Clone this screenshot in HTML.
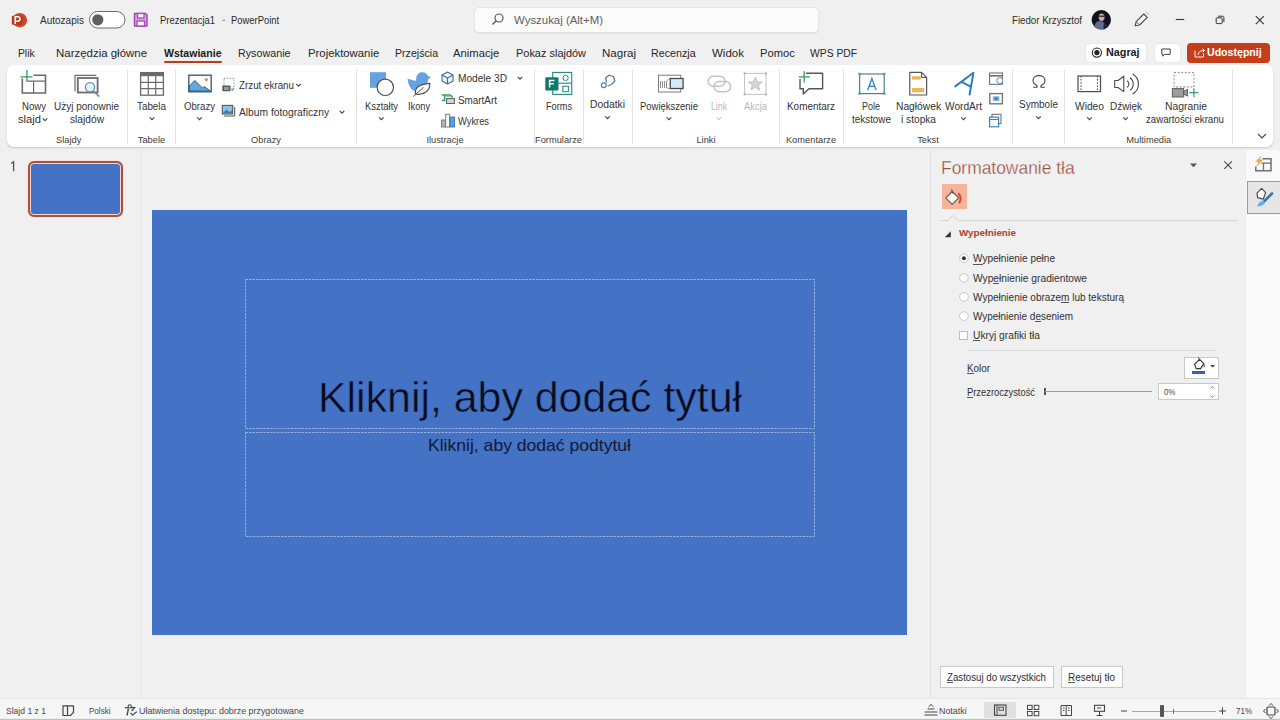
<!DOCTYPE html>
<html><head><meta charset="utf-8"><style>
html,body{margin:0;padding:0;width:1280px;height:720px;overflow:hidden;background:#f0f0f0;font-family:"Liberation Sans",sans-serif;}
.t{position:absolute;white-space:nowrap;transform-origin:0 0;}
svg{overflow:visible}
</style></head><body>
<div style="position:absolute;left:0px;top:0px;width:1280px;height:720px;background:#f0f0f0"></div>
<div style="position:absolute;left:7px;top:65px;width:1266px;height:82px;background:#fff;border-radius:7px;box-shadow:0 1.5px 2px -0.8px rgba(0,0,0,0.16)"></div>
<div style="position:absolute;left:140px;top:150px;width:1px;height:550px;background:#e6e6e6"></div>
<div style="position:absolute;left:930px;top:150px;width:1px;height:550px;background:#dedede"></div>
<div style="position:absolute;left:1246px;top:150px;width:34px;height:550px;background:#f9f9f9"></div>
<div style="position:absolute;left:0px;top:699px;width:1280px;height:21px;background:#f6f6f6"></div>
<div style="position:absolute;left:0px;top:698px;width:1280px;height:1px;background:#e6e6e6"></div>
<div style="position:absolute;left:0px;top:718px;width:1280px;height:1px;background:#e6f2ec"></div>
<div style="position:absolute;left:0px;top:719px;width:1280px;height:1px;background:#b2c6bb"></div>
<div class="t" style="left:40.00px;top:13.82px;font-size:10.50px;line-height:12.60px;color:#2b2b2b;transform:scaleX(0.9542);">Autozapis</div>
<div class="t" style="left:160.00px;top:13.82px;font-size:10.50px;line-height:12.60px;color:#2b2b2b;transform:scaleX(0.8975);">Prezentacja1</div>
<div class="t" style="left:230.60px;top:13.82px;font-size:10.50px;line-height:12.60px;color:#2b2b2b;transform:scaleX(0.8968);">PowerPoint</div>
<div style="position:absolute;left:474px;top:7px;width:345px;height:26px;background:#fbfbfb;border:1px solid #e4e4e4;border-radius:5px;box-sizing:border-box;box-shadow:0 1px 1px rgba(0,0,0,0.07)"></div>
<div class="t" style="left:514.00px;top:13.82px;font-size:10.50px;line-height:12.60px;color:#5f5f5f;transform:scaleX(1.0871);">Wyszukaj (Alt+M)</div>
<div class="t" style="left:1012.00px;top:13.82px;font-size:10.50px;line-height:12.60px;color:#2b2b2b;transform:scaleX(0.9229);">Fiedor Krzysztof</div>
<div class="t" style="left:17.80px;top:46.93px;font-size:11.00px;line-height:13.20px;color:#262626;transform:scaleX(0.9365);">Plik</div>
<div class="t" style="left:56.00px;top:46.93px;font-size:11.00px;line-height:13.20px;color:#262626;transform:scaleX(1.0408);">Narzędzia główne</div>
<div class="t" style="left:237.50px;top:46.93px;font-size:11.00px;line-height:13.20px;color:#262626;transform:scaleX(0.9758);">Rysowanie</div>
<div class="t" style="left:307.50px;top:46.93px;font-size:11.00px;line-height:13.20px;color:#262626;transform:scaleX(1.0313);">Projektowanie</div>
<div class="t" style="left:394.70px;top:46.93px;font-size:11.00px;line-height:13.20px;color:#262626;transform:scaleX(0.9659);">Przejścia</div>
<div class="t" style="left:453.40px;top:46.93px;font-size:11.00px;line-height:13.20px;color:#262626;transform:scaleX(1.0234);">Animacje</div>
<div class="t" style="left:516.00px;top:46.93px;font-size:11.00px;line-height:13.20px;color:#262626;transform:scaleX(0.9956);">Pokaz slajdów</div>
<div class="t" style="left:602.00px;top:46.93px;font-size:11.00px;line-height:13.20px;color:#262626;transform:scaleX(1.0493);">Nagraj</div>
<div class="t" style="left:651.00px;top:46.93px;font-size:11.00px;line-height:13.20px;color:#262626;transform:scaleX(0.9726);">Recenzja</div>
<div class="t" style="left:712.00px;top:46.93px;font-size:11.00px;line-height:13.20px;color:#262626;transform:scaleX(1.0471);">Widok</div>
<div class="t" style="left:759.70px;top:46.93px;font-size:11.00px;line-height:13.20px;color:#262626;transform:scaleX(1.0165);">Pomoc</div>
<div class="t" style="left:809.60px;top:46.93px;font-size:11.00px;line-height:13.20px;color:#262626;transform:scaleX(0.9399);">WPS PDF</div>
<div class="t" style="left:163.75px;top:46.93px;font-size:11.00px;line-height:13.20px;color:#1a1a1a;font-weight:bold;transform:scaleX(0.9599);">Wstawianie</div>
<div style="position:absolute;left:164px;top:61.3px;width:58px;height:2.0px;background:#b83c1e;border-radius:1px"></div>
<div style="position:absolute;left:1086px;top:43.5px;width:60px;height:18.5px;background:#fff;border-radius:4px;box-shadow:0 0 0 1px #e8e8e8"></div>
<div class="t" style="left:1105.80px;top:46.13px;font-size:11.00px;line-height:13.20px;color:#1a1a1a;font-weight:bold;transform:scaleX(0.9815);">Nagraj</div>
<div style="position:absolute;left:1155px;top:43.5px;width:25px;height:18.5px;background:#fff;border-radius:4px;box-shadow:0 0 0 1px #e8e8e8"></div>
<div style="position:absolute;left:1187px;top:43px;width:83px;height:19.5px;background:#c43e1c;border-radius:4px"></div>
<div class="t" style="left:1207.30px;top:46.13px;font-size:11.00px;line-height:13.20px;color:#fff;font-weight:bold;transform:scaleX(0.9626);">Udostępnij</div>
<div style="position:absolute;left:127px;top:69px;width:1px;height:75px;background:#e3e3e3"></div>
<div style="position:absolute;left:175px;top:69px;width:1px;height:75px;background:#e3e3e3"></div>
<div style="position:absolute;left:356px;top:69px;width:1px;height:75px;background:#e3e3e3"></div>
<div style="position:absolute;left:534px;top:69px;width:1px;height:75px;background:#e3e3e3"></div>
<div style="position:absolute;left:583px;top:69px;width:1px;height:75px;background:#e3e3e3"></div>
<div style="position:absolute;left:632px;top:69px;width:1px;height:75px;background:#e3e3e3"></div>
<div style="position:absolute;left:779px;top:69px;width:1px;height:75px;background:#e3e3e3"></div>
<div style="position:absolute;left:843px;top:69px;width:1px;height:75px;background:#e3e3e3"></div>
<div style="position:absolute;left:1012px;top:69px;width:1px;height:75px;background:#e3e3e3"></div>
<div style="position:absolute;left:1064px;top:69px;width:1px;height:75px;background:#e3e3e3"></div>
<div style="position:absolute;left:1232px;top:69px;width:1px;height:75px;background:#e3e3e3"></div>
<div class="t" style="left:56.09px;top:134.73px;font-size:9.30px;line-height:11.16px;color:#3b3b3b;transform:scaleX(1.0000);">Slajdy</div>
<div class="t" style="left:137.80px;top:134.73px;font-size:9.30px;line-height:11.16px;color:#3b3b3b;transform:scaleX(1.0000);">Tabele</div>
<div class="t" style="left:251.01px;top:134.73px;font-size:9.30px;line-height:11.16px;color:#3b3b3b;transform:scaleX(1.0000);">Obrazy</div>
<div class="t" style="left:426.39px;top:134.73px;font-size:9.30px;line-height:11.16px;color:#3b3b3b;transform:scaleX(1.0000);">Ilustracje</div>
<div class="t" style="left:534.99px;top:134.73px;font-size:9.30px;line-height:11.16px;color:#3b3b3b;transform:scaleX(1.0000);">Formularze</div>
<div class="t" style="left:696.44px;top:134.73px;font-size:9.30px;line-height:11.16px;color:#3b3b3b;transform:scaleX(1.0000);">Linki</div>
<div class="t" style="left:785.93px;top:134.73px;font-size:9.30px;line-height:11.16px;color:#3b3b3b;transform:scaleX(1.0000);">Komentarze</div>
<div class="t" style="left:917.15px;top:134.73px;font-size:9.30px;line-height:11.16px;color:#3b3b3b;transform:scaleX(1.0000);">Tekst</div>
<div class="t" style="left:1126.27px;top:134.73px;font-size:9.30px;line-height:11.16px;color:#3b3b3b;transform:scaleX(1.0000);">Multimedia</div>
<div class="t" style="left:22.00px;top:100.61px;font-size:10.00px;line-height:12.00px;color:#333333;transform:scaleX(0.9598);">Nowy</div>
<div class="t" style="left:18.00px;top:113.61px;font-size:10.00px;line-height:12.00px;color:#333333;transform:scaleX(1.1184);">slajd</div>
<div class="t" style="left:54.00px;top:100.61px;font-size:10.00px;line-height:12.00px;color:#333333;transform:scaleX(0.9995);">Użyj ponownie</div>
<div class="t" style="left:70.00px;top:113.61px;font-size:10.00px;line-height:12.00px;color:#333333;transform:scaleX(1.0195);">slajdów</div>
<div class="t" style="left:137.00px;top:100.61px;font-size:10.00px;line-height:12.00px;color:#333333;transform:scaleX(0.9842);">Tabela</div>
<div class="t" style="left:184.00px;top:100.61px;font-size:10.00px;line-height:12.00px;color:#333333;transform:scaleX(0.9618);">Obrazy</div>
<div class="t" style="left:239.00px;top:79.61px;font-size:10.00px;line-height:12.00px;color:#333333;transform:scaleX(0.9799);">Zrzut ekranu</div>
<div class="t" style="left:239.00px;top:106.61px;font-size:10.00px;line-height:12.00px;color:#333333;transform:scaleX(1.0249);">Album fotograficzny</div>
<div class="t" style="left:365.00px;top:100.61px;font-size:10.00px;line-height:12.00px;color:#333333;transform:scaleX(0.9426);">Kształty</div>
<div class="t" style="left:408.00px;top:100.61px;font-size:10.00px;line-height:12.00px;color:#333333;transform:scaleX(0.9205);">Ikony</div>
<div class="t" style="left:458.00px;top:72.61px;font-size:10.00px;line-height:12.00px;color:#333333;transform:scaleX(1.0133);">Modele 3D</div>
<div class="t" style="left:458.00px;top:94.61px;font-size:10.00px;line-height:12.00px;color:#333333;transform:scaleX(0.9887);">SmartArt</div>
<div class="t" style="left:458.00px;top:115.61px;font-size:10.00px;line-height:12.00px;color:#333333;transform:scaleX(0.9325);">Wykres</div>
<div class="t" style="left:546.00px;top:100.61px;font-size:10.00px;line-height:12.00px;color:#333333;transform:scaleX(0.9178);">Forms</div>
<div class="t" style="left:590.00px;top:98.61px;font-size:10.00px;line-height:12.00px;color:#333333;transform:scaleX(1.0323);">Dodatki</div>
<div class="t" style="left:640.00px;top:100.61px;font-size:10.00px;line-height:12.00px;color:#333333;transform:scaleX(0.9486);">Powiększenie</div>
<div class="t" style="left:711.00px;top:100.61px;font-size:10.00px;line-height:12.00px;color:#b8b8b8;transform:scaleX(0.8722);">Link</div>
<div class="t" style="left:744.00px;top:100.61px;font-size:10.00px;line-height:12.00px;color:#b8b8b8;transform:scaleX(0.9406);">Akcja</div>
<div class="t" style="left:787.00px;top:100.61px;font-size:10.00px;line-height:12.00px;color:#333333;transform:scaleX(0.9927);">Komentarz</div>
<div class="t" style="left:862.00px;top:100.61px;font-size:10.00px;line-height:12.00px;color:#333333;transform:scaleX(0.8994);">Pole</div>
<div class="t" style="left:852.00px;top:113.61px;font-size:10.00px;line-height:12.00px;color:#333333;transform:scaleX(0.9883);">tekstowe</div>
<div class="t" style="left:896.00px;top:100.61px;font-size:10.00px;line-height:12.00px;color:#333333;transform:scaleX(1.0248);">Nagłówek</div>
<div class="t" style="left:901.00px;top:113.61px;font-size:10.00px;line-height:12.00px;color:#333333;transform:scaleX(1.0156);">i stopka</div>
<div class="t" style="left:945.00px;top:100.61px;font-size:10.00px;line-height:12.00px;color:#333333;transform:scaleX(1.0140);">WordArt</div>
<div class="t" style="left:1019.00px;top:98.61px;font-size:10.00px;line-height:12.00px;color:#333333;transform:scaleX(1.0024);">Symbole</div>
<div class="t" style="left:1075.00px;top:100.61px;font-size:10.00px;line-height:12.00px;color:#333333;transform:scaleX(1.0232);">Wideo</div>
<div class="t" style="left:1110.00px;top:100.61px;font-size:10.00px;line-height:12.00px;color:#333333;transform:scaleX(0.9930);">Dźwięk</div>
<div class="t" style="left:1165.00px;top:100.61px;font-size:10.00px;line-height:12.00px;color:#333333;transform:scaleX(1.0350);">Nagranie</div>
<div class="t" style="left:1146.00px;top:113.61px;font-size:10.00px;line-height:12.00px;color:#333333;transform:scaleX(0.9679);">zawartości ekranu</div>
<div style="position:absolute;left:27.5px;top:161.2px;width:95.3px;height:56.10000000000002px;border:2px solid #a8523e;border-radius:6px;box-sizing:border-box;background:#4472c4;box-shadow:inset 0 0 0 1px #f4d8d0,0 0 0 1px #fbe3da"></div>
<div style="position:absolute;left:152px;top:210px;width:755px;height:425px;background:#4472c4"></div>
<div class="t" style="left:318.00px;top:372.78px;font-size:42.00px;line-height:50.40px;color:#080c1c;transform:scaleX(1.0204);-webkit-text-stroke:0.5px #4472c4;">Kliknij, aby dodać tytuł</div>
<div class="t" style="left:428.00px;top:436.00px;font-size:17.00px;line-height:20.40px;color:#121a36;transform:scaleX(1.0328);">Kliknij, aby dodać podtytuł</div>
<div class="t" style="left:940.90px;top:157.61px;font-size:18.00px;line-height:21.60px;color:#9c4c38;transform:scaleX(0.9678);-webkit-text-stroke:0.3px #f0f0f0;">Formatowanie tła</div>
<div style="position:absolute;left:941.6px;top:184.3px;width:25.0px;height:25.0px;background:#f4b59c"></div>
<div class="t" style="left:959.00px;top:227.23px;font-size:9.80px;line-height:11.76px;color:#a9442a;font-weight:bold;transform:scaleX(1.0001);">Wypełnienie</div>
<div class="t" style="left:973.00px;top:253.01px;font-size:10.00px;line-height:12.00px;color:#303030;transform:scaleX(1.0046);">Wypełnienie pełne</div>
<div style="position:absolute;left:973.0px;top:263.5px;width:9.5px;height:0.7999999999999545px;background:#303030;opacity:0.8"></div>
<div class="t" style="left:973.00px;top:272.62px;font-size:10.00px;line-height:12.00px;color:#303030;transform:scaleX(1.0211);">Wypełnienie gradientowe</div>
<div style="position:absolute;left:993.3px;top:283.1px;width:5.7000000000000455px;height:0.7999999999999545px;background:#303030;opacity:0.8"></div>
<div class="t" style="left:973.00px;top:291.71px;font-size:10.00px;line-height:12.00px;color:#303030;transform:scaleX(1.0031);">Wypełnienie obrazem lub teksturą</div>
<div style="position:absolute;left:1061.0px;top:302.2px;width:8.400000000000091px;height:0.7999999999999545px;background:#303030;opacity:0.8"></div>
<div class="t" style="left:973.00px;top:310.92px;font-size:10.00px;line-height:12.00px;color:#303030;transform:scaleX(0.9949);">Wypełnienie deseniem</div>
<div style="position:absolute;left:1035.4px;top:321.40000000000003px;width:5.5px;height:0.7999999999999545px;background:#303030;opacity:0.8"></div>
<div style="position:absolute;left:959.4px;top:330.6px;width:9.0px;height:9.399999999999977px;border:1px solid #bdbdbd;background:#fff;box-sizing:border-box"></div>
<div class="t" style="left:973.00px;top:329.92px;font-size:10.00px;line-height:12.00px;color:#303030;transform:scaleX(1.0219);">Ukryj grafiki tła</div>
<div style="position:absolute;left:973.0px;top:340.40000000000003px;width:7.399999999999977px;height:0.7999999999999545px;background:#303030;opacity:0.8"></div>
<div style="position:absolute;left:968px;top:350px;width:249px;height:1px;background:#dadada"></div>
<div class="t" style="left:967.00px;top:362.92px;font-size:10.00px;line-height:12.00px;color:#303030;transform:scaleX(0.9853);">Kolor</div>
<div style="position:absolute;left:967.0px;top:373.40000000000003px;width:6.600000000000023px;height:0.7999999999999545px;background:#303030;opacity:0.8"></div>
<div style="position:absolute;left:1184.3px;top:356.5px;width:35.200000000000045px;height:22.100000000000023px;border:1px solid #c8c8c8;background:#fff;box-sizing:border-box"></div>
<div style="position:absolute;left:1191.6px;top:370.8px;width:13.0px;height:2.8999999999999773px;background:#3a5fb5"></div>
<div class="t" style="left:967.00px;top:386.72px;font-size:10.00px;line-height:12.00px;color:#303030;transform:scaleX(0.9342);">Przezroczystość</div>
<div style="position:absolute;left:967.0px;top:397.20000000000005px;width:6.2000000000000455px;height:0.7999999999999545px;background:#303030;opacity:0.8"></div>
<div style="position:absolute;left:1044px;top:388px;width:1.5px;height:7px;background:#555"></div>
<div style="position:absolute;left:1045px;top:391px;width:107px;height:1px;background:#9d9d9d"></div>
<div style="position:absolute;left:1158.2px;top:383.2px;width:61.299999999999955px;height:17.19999999999999px;border:1px solid #c8c8c8;background:#fff;box-sizing:border-box"></div>
<div class="t" style="left:1163.70px;top:386.70px;font-size:8.50px;line-height:10.20px;color:#444;transform:scaleX(0.9198);">0%</div>
<div style="position:absolute;left:940px;top:666px;width:114px;height:22px;border:1px solid #c8c8c8;background:#fdfdfd;box-sizing:border-box"></div>
<div class="t" style="left:947.00px;top:671.91px;font-size:10.00px;line-height:12.00px;color:#303030;transform:scaleX(0.9682);">Zastosuj do wszystkich</div>
<div style="position:absolute;left:947.0px;top:682.4px;width:5.899999999999977px;height:0.7999999999999545px;background:#303030;opacity:0.8"></div>
<div style="position:absolute;left:1061px;top:666px;width:62px;height:22px;border:1px solid #c8c8c8;background:#fdfdfd;box-sizing:border-box"></div>
<div class="t" style="left:1068.00px;top:671.91px;font-size:10.00px;line-height:12.00px;color:#303030;transform:scaleX(0.9948);">Resetuj tło</div>
<div style="position:absolute;left:1068.0px;top:682.4px;width:7.2000000000000455px;height:0.7999999999999545px;background:#303030;opacity:0.8"></div>
<div style="position:absolute;left:1246.6px;top:180.6px;width:33.40000000000009px;height:33.099999999999994px;background:#e6e6e6;border:1px solid #9a9a9a;border-right:none;box-sizing:border-box"></div>
<div class="t" style="left:6.00px;top:705.74px;font-size:8.60px;line-height:10.32px;color:#474747;transform:scaleX(0.9961);">Slajd 1 z 1</div>
<div class="t" style="left:88.80px;top:705.64px;font-size:8.60px;line-height:10.32px;color:#474747;transform:scaleX(0.9372);">Polski</div>
<div class="t" style="left:139.00px;top:705.74px;font-size:8.60px;line-height:10.32px;color:#474747;transform:scaleX(1.0334);">Ułatwienia dostępu: dobrze przygotowane</div>
<div class="t" style="left:939.40px;top:705.74px;font-size:8.60px;line-height:10.32px;color:#474747;transform:scaleX(1.0349);">Notatki</div>
<div style="position:absolute;left:984.4px;top:701.5px;width:31.200000000000045px;height:16.5px;background:#e0e0e0"></div>
<div style="position:absolute;left:1132px;top:710.5px;width:84px;height:1.1000000000000227px;background:#a8a8a8"></div>
<div style="position:absolute;left:1160px;top:704.5px;width:3.5px;height:12.5px;background:#555;border-radius:1px"></div>
<div style="position:absolute;left:1173px;top:708.5px;width:1px;height:5.0px;background:#777"></div>
<div class="t" style="left:1236.00px;top:705.94px;font-size:8.60px;line-height:10.32px;color:#444;transform:scaleX(0.9296);">71%</div>
<svg style="position:absolute;left:0;top:0" width="1280" height="720" viewBox="0 0 1280 720" fill="none"><circle cx="19.8" cy="20.2" r="7.3" fill="#c9472a"/><path d="M12.8 15.8 h8.6 a1 1 0 0 1 1 1 v7 a1 1 0 0 1 -1 1 h-8.6 a1 1 0 0 1 -1 -1 v-7 a1 1 0 0 1 1 -1z" fill="#b53a1f"/><path d="M15.2 24 v-7.2 h2.6 a2.2 2.2 0 0 1 0 4.4 h-2.6" stroke="#fff" stroke-width="1.5" fill="none"/><rect x="89.5" y="11.5" width="35.5" height="16.5" rx="8.25" fill="#fff" stroke="#6a6a6a" stroke-width="1"/><circle cx="97.8" cy="19.8" r="5.6" fill="#5e5e5e"/><path d="M134.5 13.5 h11 l1.5 1.5 v11 h-12.5z" fill="#d9a6e2" stroke="#a448b8" stroke-width="1.5" stroke-linejoin="round"/><rect x="137.5" y="13.5" width="6.5" height="4.5" fill="#fff" stroke="#a448b8" stroke-width="1.3"/><rect x="137" y="21" width="7.5" height="5" fill="#fff" stroke="#a448b8" stroke-width="1.3"/><rect x="222.5" y="19.8" width="2.5" height="1" fill="#777"/><circle cx="499" cy="18" r="4" stroke="#555" stroke-width="1.2"/><path d="M496.2 20.8 L492.5 24.5" stroke="#555" stroke-width="1.3"/><clipPath id="av"><circle cx="1101.3" cy="19.8" r="9.7"/></clipPath><g clip-path="url(#av)"><rect x="1090" y="9" width="24" height="24" fill="#10131d"/><path d="M1094 31 C1094 24 1096 21 1100 21 C1104 21 1106 24 1106 31z" fill="#5b6d92"/><ellipse cx="1101.6" cy="17.2" rx="2.9" ry="3.8" fill="#c9a8a8"/><rect x="1098.6" y="15.6" width="6" height="1.3" fill="#3a2a2a"/><path d="M1104 22 L1108 26 V31 H1103z" fill="#1e2740"/></g><path d="M1135.2 25.8 L1136.2 21.6 L1143.8 14 L1147.2 17.4 L1139.6 25z z" stroke="#4a4a4a" stroke-width="1.15" stroke-linejoin="round" fill="#fafafa"/><path d="M1136.4 21.8 L1139.2 24.6" stroke="#4a4a4a" stroke-width="0.9"/><path d="M1146.2 11.6 l0.6 1.6 M1148.6 13.4 l-1.5 0.6" stroke="#7fb8b0" stroke-width="0.8"/><path d="M1175.8 19.5 h8.4" stroke="#333" stroke-width="1.1"/><rect x="1216.2" y="17.8" width="6" height="5.8" rx="0.8" stroke="#333" stroke-width="1"/><path d="M1218 16.2 h4.4 a1.5 1.5 0 0 1 1.5 1.5 v4.4" stroke="#333" stroke-width="1"/><path d="M1255.8 16.2 l8 8 M1263.8 16.2 l-8 8" stroke="#333" stroke-width="1.1"/><circle cx="1096.9" cy="52.6" r="4.6" stroke="#222" stroke-width="1.1"/><circle cx="1096.9" cy="52.6" r="2.6" fill="#222"/><path d="M1161.8 49 h8.4 v5.4 h-5.6 l-1.8 1.8 v-1.8 h-1 z" stroke="#333" stroke-width="0.95" stroke-linejoin="round"/><path d="M1195 50.5 v6.5 h8.5 v-3.5" stroke="#fff" stroke-width="1" fill="none" opacity="0.9"/><path d="M1198 55 q1 -4.5 5 -4.5 h1.5 M1202.5 48.5 l2 2 l-2 2" stroke="#fff" stroke-width="1" fill="none" opacity="0.9"/><path d="M42.7 118.3 l2.3 2.3 l2.3 -2.3" stroke="#474747" stroke-width="1.15" fill="none"/><path d="M149.7 117.3 l2.3 2.3 l2.3 -2.3" stroke="#474747" stroke-width="1.15" fill="none"/><path d="M197.2 117.3 l2.3 2.3 l2.3 -2.3" stroke="#474747" stroke-width="1.15" fill="none"/><path d="M296.2 83.8 l2.3 2.3 l2.3 -2.3" stroke="#474747" stroke-width="1.15" fill="none"/><path d="M339.7 110.8 l2.3 2.3 l2.3 -2.3" stroke="#474747" stroke-width="1.15" fill="none"/><path d="M379.0 117.3 l2.3 2.3 l2.3 -2.3" stroke="#474747" stroke-width="1.15" fill="none"/><path d="M517.7 76.8 l2.3 2.3 l2.3 -2.3" stroke="#474747" stroke-width="1.15" fill="none"/><path d="M605.2 116.3 l2.3 2.3 l2.3 -2.3" stroke="#474747" stroke-width="1.15" fill="none"/><path d="M666.7 117.3 l2.3 2.3 l2.3 -2.3" stroke="#474747" stroke-width="1.15" fill="none"/><path d="M716.7 117.3 l2.3 2.3 l2.3 -2.3" stroke="#c8c8c8" stroke-width="1.15" fill="none"/><path d="M961.2 117.3 l2.3 2.3 l2.3 -2.3" stroke="#474747" stroke-width="1.15" fill="none"/><path d="M1036.2 116.3 l2.3 2.3 l2.3 -2.3" stroke="#474747" stroke-width="1.15" fill="none"/><path d="M1087.2 117.3 l2.3 2.3 l2.3 -2.3" stroke="#474747" stroke-width="1.15" fill="none"/><path d="M1123.2 117.3 l2.3 2.3 l2.3 -2.3" stroke="#474747" stroke-width="1.15" fill="none"/><path d="M1258 134 l4 4 l4 -4" stroke="#444" stroke-width="1.1" fill="none"/><path d="M33.5 75.3 H45.5 V93 H22.3 V78.5" stroke="#6b6b6b" stroke-width="1.6"/><path d="M27.5 81.2 H45.5 M33.6 81.2 V93" stroke="#6b6b6b" stroke-width="1.2"/><path d="M26.9 70 V82 M20.5 76.8 H32.5" stroke="#2e9e5e" stroke-width="1.3"/><path d="M75 91.2 V75.3 H96.3" stroke="#6b6b6b" stroke-width="1.2"/><rect x="77.8" y="78" width="19.8" height="14.5" stroke="#6b6b6b" stroke-width="1.8" fill="#fff"/><circle cx="90" cy="87.3" r="4.6" stroke="#5b8db8" stroke-width="1.3" fill="#e8f2fa"/><path d="M93.3 90.8 L99.3 96.6" stroke="#5b8db8" stroke-width="1.5"/><rect x="140.6" y="72.6" width="22.8" height="22.6" stroke="#6b6b6b" stroke-width="1.3" fill="#fff"/><rect x="140.6" y="72.6" width="22.8" height="3.6" fill="#6b6b6b"/><path d="M148.3 76 V95 M155.7 76 V95 M140.6 82.3 H163.4 M140.6 88.6 H163.4" stroke="#6b6b6b" stroke-width="1.2"/><rect x="188.8" y="75.2" width="22.4" height="16.6" stroke="#415f77" stroke-width="1.4" fill="#fff"/><path d="M189.5 91 V86 L194.8 80.5 L202.5 88 L204 86.5 L210.5 91 z" fill="#62a5e0" stroke="#2f5f86" stroke-width="1"/><circle cx="206.3" cy="79.6" r="1.7" fill="#e0953f"/><rect x="224" y="78.3" width="10" height="10.8" stroke="#8a8a8a" stroke-width="0.9" stroke-dasharray="1.6 1.2"/><rect x="222.3" y="85.5" width="8.2" height="5.8" rx="0.8" fill="#5c5c5c"/><rect x="224" y="87" width="4.8" height="3" fill="#9a9a9a"/><path d="M233 87.5 v3 h-1.5" stroke="#3aa060" stroke-width="0.9"/><path d="M224 116 H234.7 V107" stroke="#555" stroke-width="1"/><rect x="222.3" y="105.4" width="10.4" height="8.6" stroke="#555" stroke-width="1.1" fill="#8cc3e8"/><path d="M223 113 L226.5 109.5 L229.5 112 L232 110.5 V113.5 H223z" fill="#3d7fb5"/><rect x="370" y="72.2" width="16" height="15.6" fill="#62a3e0"/><circle cx="385.3" cy="87.3" r="8.2" fill="#fff" stroke="#4f4f4f" stroke-width="1.2"/><path d="M407.6 78.8 C410.5 79.5 413 80.5 416.2 80.8 C416 79.8 416 78.8 416.3 77.8 C416.8 74.2 419.3 72.2 422.3 72.2 C425.3 72.2 427.3 74 428 76 L431 77 L428 79.5 C428 84 425 88 421 89.5 L414 91 C410 89 408 84 407.6 78.8z" fill="#62a3e0"/><path d="M415.5 94 C414.5 88 418.5 84.2 429.8 83.3 C430.3 90.5 424.5 95 416.5 94.2 z" fill="#fff" stroke="#4f4f4f" stroke-width="1.2"/><path d="M413.3 96.5 L423.5 87.3" stroke="#4f4f4f" stroke-width="1"/><path d="M447.5 72 L453 75 V81 L447.5 84 L442 81 V75 z M442 75 L447.5 78 L453 75 M447.5 78 V84" stroke="#3c6d8e" stroke-width="1.1" stroke-linejoin="round" fill="#eaf4fb"/><path d="M441.8 95 H450 L452.8 97.2 M444.6 95 V100.6 M441.8 100.4 H445.2" stroke="#3f9a62" stroke-width="1.5" fill="none"/><path d="M445.5 96.5 H450.5 L452 98" stroke="#8fd0a4" stroke-width="1.2" fill="none"/><rect x="446.6" y="98.6" width="7.8" height="4.9" fill="#d6d6d6" stroke="#5a5a5a" stroke-width="1"/><rect x="441.5" y="120" width="4" height="7" fill="#b5b5b5" stroke="#707070" stroke-width="0.8"/><rect x="445.7" y="114.3" width="4" height="12.7" fill="#fff" stroke="#707070" stroke-width="0.9"/><rect x="450" y="117" width="4.6" height="10" fill="#5aa0dc" stroke="#2f6e9e" stroke-width="0.8"/><rect x="552.7" y="72.4" width="19" height="22" stroke="#1f8a7e" stroke-width="1.1" fill="#fff"/><path d="M552.7 83.2 H571.7" stroke="#1f8a7e" stroke-width="1.1"/><circle cx="565.6" cy="77.9" r="2.6" stroke="#1f8a7e" stroke-width="1"/><rect x="562.8" y="86.3" width="5.6" height="5.4" stroke="#1f8a7e" stroke-width="1"/><rect x="545.3" y="77.3" width="13.2" height="13.1" rx="1" fill="#0e7a6d"/><path d="M549.6 87.6 V80.4 H554.5 M549.6 83.8 H553.8" stroke="#fff" stroke-width="1.5"/><path d="M606.5 82.5 L605.5 78 L609 75.2 L613.5 76.5 L614.8 81 L611.5 84.5 L607.5 86" stroke="#5a7ea6" stroke-width="1.3" fill="none" stroke-linejoin="round"/><circle cx="603.8" cy="85.2" r="2.4" stroke="#5a7ea6" stroke-width="1.2"/><rect x="658.5" y="75.2" width="22.2" height="16.8" stroke="#7a7a7a" stroke-width="1" fill="#fff"/><path d="M660.5 81 v7 M662.5 81 v7 M664.5 81 v7 M666.5 81 v7" stroke="#8e8e8e" stroke-width="1"/><path d="M666.5 81 L670 78.5 M666.5 88 L670 88.5" stroke="#8e8e8e" stroke-width="0.8"/><rect x="670.3" y="78.5" width="12.8" height="10" stroke="#4a4a4a" stroke-width="1.3" fill="#d6eaf8"/><rect x="708" y="76.2" width="17" height="10" rx="5" stroke="#c4c4c4" stroke-width="1.5"/><rect x="714" y="81.5" width="16.6" height="10.3" rx="5" stroke="#c4c4c4" stroke-width="1.5"/><rect x="744.6" y="73.4" width="21.4" height="21" stroke="#c0c0c0" stroke-width="1"/><path d="M755.3 77 L757.2 81.8 L762.2 82 L758.3 85.2 L759.7 90 L755.3 87.3 L750.9 90 L752.3 85.2 L748.4 82 L753.4 81.8z" fill="#d6d6d6" stroke="#b8b8b8" stroke-width="0.8"/><rect x="743.6" y="72.4" width="2" height="2" fill="#b0b0b0"/><rect x="765" y="72.4" width="2" height="2" fill="#b0b0b0"/><rect x="743.6" y="93.4" width="2" height="2" fill="#b0b0b0"/><rect x="765" y="93.4" width="2" height="2" fill="#b0b0b0"/><path d="M806 73.2 H822.6 V88.8 H809 L803.3 94 V88.8 H800 V79" stroke="#555" stroke-width="1.4" stroke-linejoin="round" fill="#fff"/><path d="M804.2 71.2 V82.5 M798.6 76.9 H809.8" stroke="#2ea05e" stroke-width="1.3"/><rect x="859.6" y="74" width="24.6" height="19.6" stroke="#5a7c8c" stroke-width="1.2" fill="#fff"/><path d="M867.7 90 L871.9 78.6 L876.1 90 M869.2 86.2 H874.6" stroke="#3a8cc8" stroke-width="1.5" fill="none"/><rect x="858.4" y="72.8" width="2.4" height="2.4" fill="#4f9aa8"/><rect x="858.4" y="92.4" width="2.4" height="2.4" fill="#4f9aa8"/><rect x="883.0" y="72.8" width="2.4" height="2.4" fill="#4f9aa8"/><rect x="883.0" y="92.4" width="2.4" height="2.4" fill="#4f9aa8"/><path d="M909.8 72.4 H921.5 L926.6 77.5 V95 H909.8z" stroke="#555" stroke-width="1.2" fill="#fff" stroke-linejoin="round"/><path d="M921.5 72.4 V77.5 H926.6" stroke="#555" stroke-width="1"/><rect x="912" y="76.3" width="8.8" height="3.3" fill="#efb655"/><rect x="912" y="88" width="12" height="4.2" fill="#efb655"/><path d="M955.2 86.4 L973.4 72.8 L969.6 94.6 M961.5 81.8 L970.3 86.3" stroke="#2c7cc2" stroke-width="2" stroke-linecap="round" stroke-linejoin="round" fill="none"/><rect x="989.6" y="73" width="12.8" height="11.3" stroke="#666" stroke-width="1" fill="#fff"/><path d="M989.6 75.8 H1002.4" stroke="#666" stroke-width="1.5"/><circle cx="999.8" cy="80.6" r="3" stroke="#4f93c7" stroke-width="1" fill="#fff"/><rect x="989.8" y="93.6" width="12.6" height="10.2" stroke="#777" stroke-width="1.4" fill="#fff"/><rect x="992.8" y="96.3" width="6.6" height="4.8" fill="#7fb4de"/><rect x="994.8" y="97.5" width="2.6" height="2.3" fill="#2a6fb0"/><rect x="992" y="114.3" width="9" height="9.2" stroke="#666" stroke-width="1" fill="#fff"/><rect x="989.6" y="117.2" width="9" height="9.6" stroke="#3a84c0" stroke-width="1.2" fill="#fff"/><path d="M989.6 119.5 H998.6" stroke="#3a84c0" stroke-width="1"/><path d="M1033.2 87.2 H1037 V85.6 C1034.4 84.4 1033 82.4 1033 80.4 C1033 77.6 1035.5 75.6 1039 75.6 C1042.5 75.6 1045 77.6 1045 80.4 C1045 82.4 1043.6 84.4 1041 85.6 V87.2 H1044.8" stroke="#444" stroke-width="1.1" fill="none"/><rect x="1078" y="76" width="22.5" height="15.6" stroke="#4a4a4a" stroke-width="1.2" fill="#fff"/><path d="M1081 76 V91.6 M1097.5 76 V91.6" stroke="#4a4a4a" stroke-width="1.1" stroke-dasharray="1.5 1.6"/><path d="M1114.7 80.5 H1118 L1123.8 76.2 V91.6 L1118 87.5 H1114.7z" stroke="#4a4a4a" stroke-width="1.1" fill="#fff" stroke-linejoin="round"/><path d="M1127 80.8 a3.8 3.8 0 0 1 0 6.6 M1129.8 77.8 a7.5 7.5 0 0 1 0 12.6 M1132.6 74 a11.5 11.5 0 0 1 0 20" stroke="#4a4a4a" stroke-width="1.1" fill="none"/><rect x="1174" y="72.6" width="20" height="14.4" stroke="#8a8a8a" stroke-width="1" stroke-dasharray="2 1.6"/><rect x="1172.3" y="88.6" width="11.4" height="8.4" fill="#9c9c9c" stroke="#555" stroke-width="0.9"/><path d="M1183.7 91.5 L1187.5 89.2 V96.2 L1183.7 94z" fill="#9c9c9c" stroke="#555" stroke-width="0.9"/><path d="M1193.9 88.2 V97.2 M1189.4 92.7 H1198.4" stroke="#2ea05e" stroke-width="1.2"/><path d="M13.6 171.2 V161.8 L11.2 163.6" stroke="#6e4a3c" stroke-width="1.3" fill="none"/><rect x="245.5" y="279.5" width="569" height="149" stroke="#95b0e0" stroke-width="1" stroke-dasharray="2.5 1"/><rect x="245.5" y="432.5" width="569" height="104" stroke="#95b0e0" stroke-width="1" stroke-dasharray="2.5 1"/><path d="M1190 163.5 h7 l-3.5 3.8z" fill="#555"/><path d="M1224.3 161.3 l7.5 7.5 M1231.8 161.3 l-7.5 7.5" stroke="#444" stroke-width="1.1"/><path d="M952.2 191.5 L958.6 197.9 L952.2 204.3 L945.8 197.9z" fill="#fff" stroke="#7a4a3a" stroke-width="1.1" stroke-linejoin="round"/><path d="M958.8 193.8 Q962 197.5 959.5 202.5" stroke="#d2492a" stroke-width="2" fill="none" stroke-linecap="round"/><path d="M951.5 189.5 L953.2 193.5" stroke="#555" stroke-width="1.2"/><path d="M940 220.7 H947.5 L952.7 215.5 L957.9 220.7 H1237" stroke="#d2d2d2" stroke-width="1" fill="none"/><path d="M944.8 237.3 L950.8 231.3 V237.3z" fill="#333"/><circle cx="963.9" cy="258.2" r="4.3" fill="#fff" stroke="#c2c2c2" stroke-width="0.9"/><circle cx="963.9" cy="258.2" r="2" fill="#333"/><circle cx="963.9" cy="277.8" r="4.3" fill="#fff" stroke="#c2c2c2" stroke-width="0.9"/><circle cx="963.9" cy="296.9" r="4.3" fill="#fff" stroke="#c2c2c2" stroke-width="0.9"/><circle cx="963.9" cy="316.1" r="4.3" fill="#fff" stroke="#c2c2c2" stroke-width="0.9"/><path d="M1194.6 364.2 L1199.6 359.4 L1203.8 363.6 L1200.6 368.6 L1196.2 368.6z" stroke="#333" stroke-width="1.15" fill="#fff" stroke-linejoin="round"/><path d="M1199.2 359.5 L1198.5 357.5" stroke="#333" stroke-width="1"/><path d="M1204.2 364.2 v3" stroke="#2f6fb5" stroke-width="1.2"/><path d="M1210 365 h5.2 l-2.6 2.6z" fill="#444"/><path d="M1210.3 388.5 l2 -2 l2 2 M1210.3 395.5 l2 2 l2 -2" stroke="#777" stroke-width="0.9" fill="none"/><g transform="translate(0,1)"><path d="M1262.5 157.8 H1271 V169.8 H1255.8 V165.5" stroke="#707070" stroke-width="1.5" fill="none"/><path d="M1261.5 162.2 H1271 M1263.5 162.2 V169.8" stroke="#707070" stroke-width="1.3"/><path d="M1261.8 154.2 L1255.3 160.8 H1258.6 L1256 166.5 L1263 158.6 H1259.6z" fill="#f0a22e"/></g><path d="M1257 193.2 L1261.6 188.4 L1265.6 192.6 L1263.2 199.2 L1257.6 197.6z" stroke="#4a4a4a" stroke-width="1.2" fill="#fff" stroke-linejoin="round"/><path d="M1264.5 201 L1272 193.5" stroke="#3a74b4" stroke-width="2.6" stroke-linecap="round"/><path d="M1257 206.5 Q1258.5 201.5 1263 200.5 L1265.2 203 Q1262.5 206.5 1257 206.5z" fill="#62b2e6"/><path d="M63 705.8 h10.5 v6.5 l-3 3.2 h-7.5 z M67.5 705.8 v9.7" stroke="#444" stroke-width="1.2" fill="none" stroke-linejoin="round"/><circle cx="129.7" cy="706.4" r="1.6" stroke="#444" stroke-width="1.1"/><path d="M124.9 707.8 Q127 707.2 128.3 708 M131 708 Q133 707.2 134.7 707.6 L131.6 711" stroke="#444" stroke-width="1.2" fill="none"/><path d="M128.4 708.6 L127 715.5" stroke="#444" stroke-width="1.4"/><path d="M130.5 712.8 L132.6 715 L136.8 711.8" stroke="#444" stroke-width="1.2" fill="none"/><path d="M924.5 712 h13 M924.5 715 h13 M927.5 709 h7" stroke="#444" stroke-width="1"/><path d="M928.5 706.8 l2.5 -2.3 l2.5 2.3" stroke="#444" stroke-width="1" fill="none"/><rect x="994.5" y="705" width="11.5" height="10.3" stroke="#444" stroke-width="1.1"/><path d="M997 705 v10.3" stroke="#444" stroke-width="1"/><rect x="999" y="707.2" width="4.5" height="3" stroke="#444" stroke-width="0.9"/><rect x="1027.5" y="705.3" width="4.6" height="4.2" stroke="#444" stroke-width="1"/><rect x="1034.2" y="705.3" width="4.6" height="4.2" stroke="#444" stroke-width="1"/><rect x="1027.5" y="711.5" width="4.6" height="4.2" stroke="#444" stroke-width="1"/><rect x="1034.2" y="711.5" width="4.6" height="4.2" stroke="#444" stroke-width="1"/><path d="M1061 705.5 h10.5 v10 h-10.5z M1066.2 705.5 v10 M1063 708 h1.5 M1063 710.5 h1.5 M1068 708 h1.5 M1068 710.5 h1.5" stroke="#444" stroke-width="1" fill="none"/><rect x="1094.5" y="705.3" width="10" height="6" stroke="#444" stroke-width="1.1"/><path d="M1099.5 711.3 v4 M1096.5 715.5 h6 M1097 708 h4" stroke="#444" stroke-width="1"/><path d="M1121 711 h6 M1219 711 h7 M1222.5 707.5 v7" stroke="#444" stroke-width="1"/><rect x="1267" y="707" width="8" height="8" rx="1" stroke="#444" stroke-width="1.2"/><path d="M1269 705.5 l2 -2 l2 2 M1269 716.5 l2 2 l2 -2 M1265.5 709 l-2 2 l2 2 M1276.5 709 l2 2 l-2 2" stroke="#444" stroke-width="1" fill="none"/></svg>
</body></html>
